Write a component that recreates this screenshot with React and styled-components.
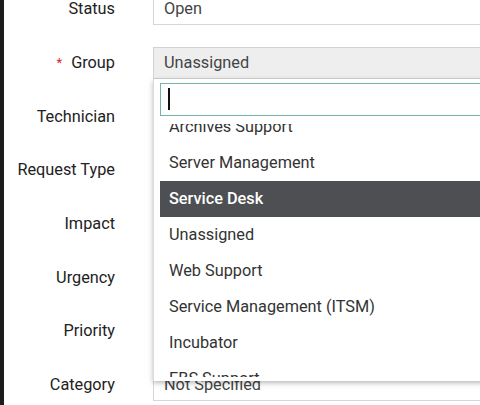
import React, { useLayoutEffect, useRef } from 'react'
import styled, { createGlobalStyle } from 'styled-components'

const fields = [
  { label: 'Status', value: 'Open' },
  { label: 'Group', value: 'Unassigned', required: true, open: true },
  { label: 'Technician', value: '' },
  { label: 'Request Type', value: '' },
  { label: 'Impact', value: '' },
  { label: 'Urgency', value: '' },
  { label: 'Priority', value: '' },
  { label: 'Category', value: 'Not Specified' },
]

const groups = [
  'Archives Support',
  'Server Management',
  'Service Desk',
  'Unassigned',
  'Web Support',
  'Service Management (ITSM)',
  'Incubator',
  'EBS Support',
  'Network Support',
]

const GroupMenu = () => {
  const listRef = useRef(null)

  useLayoutEffect(() => {
    if (listRef.current) listRef.current.scrollTop = 15
  }, [])

  return (
    <Menu>
      <Search>
        <Caret />
      </Search>
      <List ref={listRef}>
        {groups.map((name) => (
          <Option key={name} $active={name === 'Service Desk'}>{name}</Option>
        ))}
      </List>
    </Menu>
  )
}

const App = () => {
  return (
    <Page>
      <GlobalStyle />
      <Strip />
      <Form>
        {fields.map((item) => (
          <Row key={item.label}>
            <Label>
              {item.required && <Star>*</Star>}
              {item.label}
            </Label>
            <FieldWrap>
              <Field $grey={item.open}>{item.value}</Field>
              {item.open && <GroupMenu />}
            </FieldWrap>
          </Row>
        ))}
      </Form>
    </Page>
  )
}

const GlobalStyle = createGlobalStyle`
  html, body {
    margin: 0;
    padding: 0;
    overflow: hidden;
    background: #fff;
  }
  body {
    font-family: Roboto, "Liberation Sans", sans-serif;
  }
`

const Page = styled.div`
  display: flex;
  width: 480px;
  height: 405px;
  overflow: hidden;
`

const Strip = styled.div`
  width: 4px;
  flex-shrink: 0;
  background: #1c1c1c;
`

const Form = styled.div`
  display: flex;
  flex-direction: column;
  margin-top: -18px;
`

const Row = styled.div`
  display: grid;
  grid-template-columns: 111px 360px;
  column-gap: 38px;
  align-items: center;
  height: 53.7px;
  flex-shrink: 0;
`

const Label = styled.div`
  text-align: right;
  font-size: 16.3px;
  color: #222;
  white-space: nowrap;
`

const Star = styled.span`
  color: #e0222b;
  font-size: 13px;
  margin-right: 9px;
  position: relative;
  top: -1px;
`

const FieldWrap = styled.div`
  position: relative;
`

const Field = styled.div`
  box-sizing: border-box;
  height: 32px;
  border: 1px solid ${(p) => (p.$grey ? '#d2d2d2' : '#d6d6d6')};
  background: ${(p) => (p.$grey ? '#eeeeee' : '#fff')};
  padding-left: 10px;
  display: flex;
  align-items: center;
  font-size: 16.3px;
  color: #444;
`

const Menu = styled.div`
  position: absolute;
  top: 100%;
  left: 0;
  right: 0;
  z-index: 5;
  background: #fff;
  padding: 4px 0 4px 6px;
  box-shadow: 0 2px 5px rgba(0, 0, 0, 0.28);
  border-left: 1px solid #dcdcdc;
`

const Search = styled.div`
  box-sizing: border-box;
  height: 33px;
  border: 1px solid #74b3a9;
  background: #fff;
  display: flex;
  align-items: center;
  padding-left: 7px;
`

const Caret = styled.span`
  width: 2px;
  height: 22px;
  background: #111;
`

const List = styled.div`
  margin-top: 8px;
  height: 253px;
  overflow: hidden;
`

const Option = styled.div`
  height: 36px;
  display: flex;
  align-items: center;
  padding-left: 9px;
  font-size: 16.3px;
  font-weight: ${(p) => (p.$active ? 500 : 400)};
  color: ${(p) => (p.$active ? '#fff' : '#333')};
  background: ${(p) => (p.$active ? '#4d4f53' : 'transparent')};
`

export default App
